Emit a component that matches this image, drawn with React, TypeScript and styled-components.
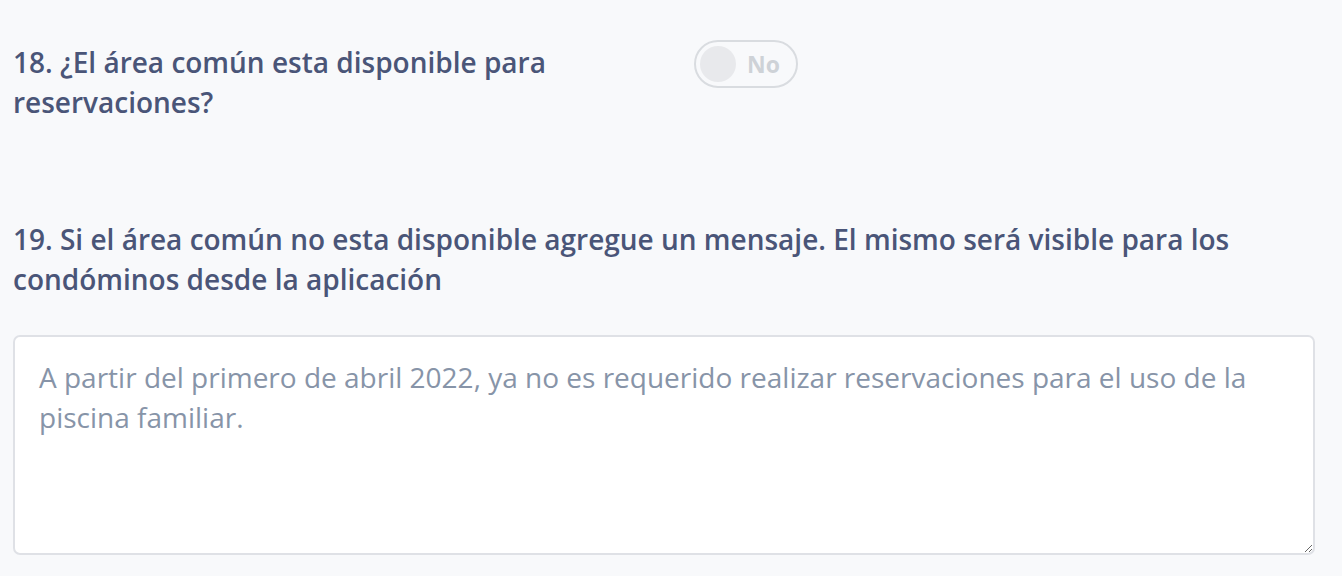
import * as React from 'react';
import styled, { createGlobalStyle } from 'styled-components';

const GlobalStyle = createGlobalStyle`
  html, body {
    margin: 0;
    padding: 0;
    background: #f8f9fb;
  }
  body {
    font-family: 'Open Sans', 'Noto Sans', sans-serif;
  }
`;

const Page = styled.div`
  display: flex;
  flex-direction: column;
  padding: 42px 27px 0 13px;
  min-height: 576px;
  box-sizing: border-box;
`;

const QuestionRow = styled.div`
  display: grid;
  grid-template-columns: 681px auto;
  align-items: start;
  margin-bottom: 97px;
`;

const Question = styled.label<{ $maxWidth?: number }>`
  display: block;
  font-size: 28px;
  line-height: 40px;
  font-weight: 600;
  color: #4a5578;
  max-width: ${(p) => (p.$maxWidth ? `${p.$maxWidth}px` : 'none')};
`;

const Toggle = styled.button`
  display: flex;
  align-items: center;
  gap: 11px;
  width: 104px;
  height: 48px;
  margin-top: -2px;
  padding: 0 0 0 4px;
  border: 2px solid #d9dce0;
  border-radius: 24px;
  background: #f8f9fb;
  box-sizing: border-box;
  cursor: pointer;
`;

const Knob = styled.span`
  width: 36px;
  height: 36px;
  border-radius: 50%;
  background: #e8e9ec;
`;

const ToggleText = styled.span`
  font-family: 'Open Sans', sans-serif;
  font-size: 23px;
  font-weight: 700;
  color: #ced2d7;
`;

const MessageBlock = styled.div`
  display: flex;
  flex-direction: column;
  gap: 36px;
`;

const MessageArea = styled.textarea`
  width: 100%;
  height: 220px;
  box-sizing: border-box;
  padding: 20px 24px;
  border: 2px solid #dfe1e6;
  border-radius: 7px;
  background: #ffffff;
  font-family: 'Open Sans', sans-serif;
  font-size: 28px;
  line-height: 40px;
  color: #8794a8;
  outline: none;
`;

const App: React.FC = () => {
  return (
    <>
      <GlobalStyle />
      <Page>
        <QuestionRow>
          <Question $maxWidth={600}>18. ¿El área común esta disponible para reservaciones?</Question>
          <Toggle type="button">
            <Knob />
            <ToggleText>No</ToggleText>
          </Toggle>
        </QuestionRow>

        <MessageBlock>
          <Question>
            19. Si el área común no esta disponible agregue un mensaje. El mismo será visible para los condóminos desde la aplicación
          </Question>
          <MessageArea
            readOnly
            defaultValue="A partir del primero de abril 2022, ya no es requerido realizar reservaciones para el uso de la piscina familiar."
          />
        </MessageBlock>
      </Page>
    </>
  );
};

export default App;
